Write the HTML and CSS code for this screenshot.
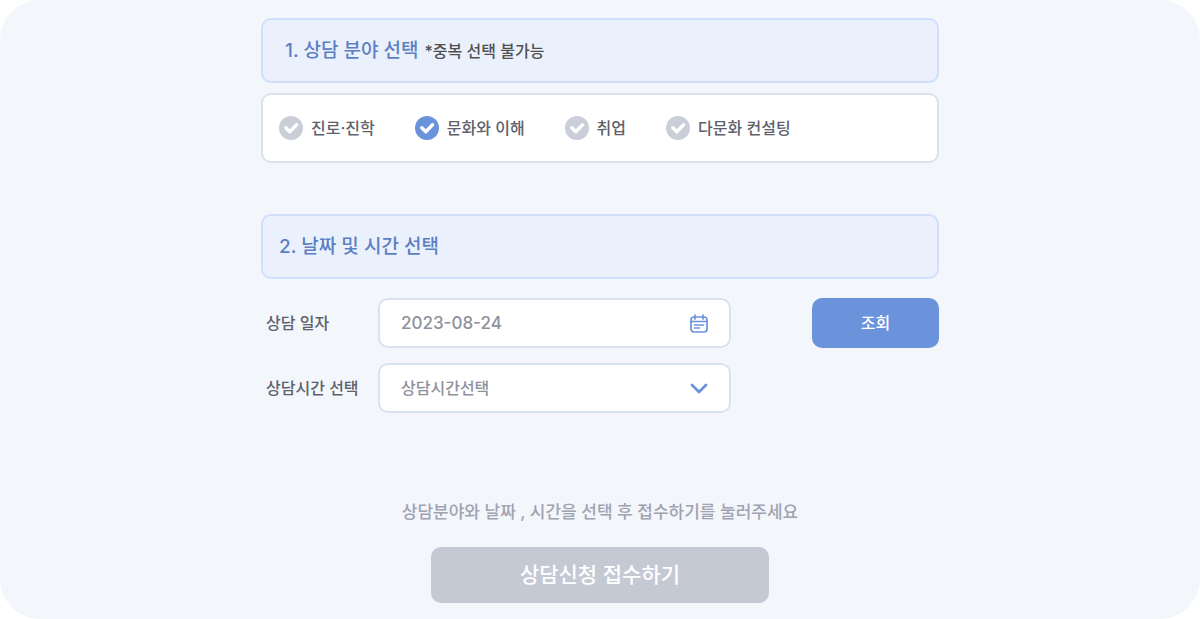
FILE: index.html
```html
<!DOCTYPE html>
<html lang="ko">
<head>
<meta charset="utf-8" />
<meta name="viewport" content="width=device-width, initial-scale=1" />
<title>상담 신청</title>
<link rel="stylesheet" href="styles.css">
</head>
<body>
  <main class="page">
    <form class="container">
      <section>
        <div class="step-title indented">
          <h2 id="fieldTitle">1. 상담 분야 선택</h2>
          <span class="note">*중복 선택 불가능</span>
        </div>
        <div class="options" role="radiogroup" aria-labelledby="fieldTitle">
          <label class="option">
            <span class="check">
              <input type="radio" name="field" value="career" />
              <svg viewBox="0 0 24 24" aria-hidden="true"><path d="M6.8 11.8l4 4 6.8-7" /></svg>
            </span>
            진로·진학
          </label>
          <label class="option">
            <span class="check">
              <input type="radio" name="field" value="culture" checked />
              <svg viewBox="0 0 24 24" aria-hidden="true"><path d="M6.8 11.8l4 4 6.8-7" /></svg>
            </span>
            문화와 이해
          </label>
          <label class="option">
            <span class="check">
              <input type="radio" name="field" value="job" />
              <svg viewBox="0 0 24 24" aria-hidden="true"><path d="M6.8 11.8l4 4 6.8-7" /></svg>
            </span>
            취업
          </label>
          <label class="option">
            <span class="check">
              <input type="radio" name="field" value="consulting" />
              <svg viewBox="0 0 24 24" aria-hidden="true"><path d="M6.8 11.8l4 4 6.8-7" /></svg>
            </span>
            다문화 컨설팅
          </label>
        </div>
      </section>

      <section>
        <div class="step-title">
          <h2>2. 날짜 및 시간 선택</h2>
        </div>
        <div class="fields">
          <div class="row">
            <label class="row-label" for="dateInput">상담 일자</label>
            <div class="control">
              <input type="text" id="dateInput" value="2023-08-24" autocomplete="off" />
              <svg class="icon" viewBox="0 0 20 20" aria-hidden="true">
                <rect x="2" y="4" width="16" height="15" rx="3" />
                <path d="M2 8.5h16M6 2v4M14 2v4M5.5 12h9M5.5 15h5" />
              </svg>
            </div>
            <button type="button" class="search-btn">조회</button>
          </div>
          <div class="row">
            <label class="row-label" for="timeSelect">상담시간 선택</label>
            <div class="control">
              <select id="timeSelect">
                <option>상담시간선택</option>
              </select>
              <svg class="icon arrow" viewBox="0 0 20 20" aria-hidden="true"><path d="M3 7l7 7 7-7" /></svg>
            </div>
          </div>
        </div>
      </section>

      <div class="submit-area">
        <p>상담분야와 날짜 , 시간을 선택 후 접수하기를 눌러주세요</p>
        <button type="submit" class="submit-btn" disabled>상담신청 접수하기</button>
      </div>
    </form>
  </main>
</body>
</html>
```
FILE: styles.css
```css
* {
  box-sizing: border-box;
}
body {
  margin: 0;
  background: #fff;
  color: #5e616b;
  font-family: Inter, "Noto Sans CJK KR", sans-serif;
  font-size: 16px;
  font-weight: 500;
  line-height: 24px;
}
input, select, button {
  font: inherit;
}
.page {
  min-height: 100vh;
  padding: 18px 16px 16px;
  background: #f3f6fb;
  border-radius: 40px;
}
.container {
  max-width: 678px;
  margin: 0 auto;
}
section {
  margin-bottom: 51px;
}

/* step headers */
.step-title {
  display: flex;
  align-items: center;
  gap: 6px;
  min-height: 65px;
  padding: 0 16px;
  background: #eaf1fd;
  border: 2px solid #d0e0fc;
  border-radius: 10px;
}
.step-title.indented {
  padding: 0 22px;
}
h2 {
  margin: 0;
  color: #5c7fc4;
  font-size: 19px;
  font-weight: 500;
}
.note {
  color: #505050;
}

/* radio options */
.options {
  display: flex;
  flex-wrap: wrap;
  align-items: center;
  gap: 12px 40px;
  min-height: 70px;
  margin-top: 10px;
  padding: 8px 16px;
  background: #fff;
  border: 2px solid #dbe2ef;
  border-radius: 10px;
}
.option {
  display: flex;
  align-items: center;
  gap: 8px;
  cursor: pointer;
}
.check {
  display: grid;
}
.check input, .check svg {
  grid-area: 1 / 1;
  width: 24px;
  height: 24px;
  margin: 0;
}
.check input {
  appearance: none;
  background: #caced8;
  border-radius: 50%;
  cursor: pointer;
}
.check input:checked {
  background: #6b93dc;
}
.check svg {
  fill: none;
  stroke: #fff;
  stroke-width: 3.4;
  stroke-linecap: round;
  stroke-linejoin: round;
  pointer-events: none;
}

/* date and time */
.fields {
  display: grid;
  gap: 15px;
  margin-top: 19px;
}
.row {
  display: flex;
  align-items: center;
}
.row-label {
  width: 117px;
  padding-left: 5px;
}
.control {
  display: grid;
  flex: 0 1 353px;
  align-items: center;
}
.control input, .control select {
  grid-area: 1 / 1;
  width: 100%;
  height: 50px;
  padding: 0 52px 0 21px;
  background: #fff;
  border: 2px solid #dbe2ef;
  border-radius: 10px;
  color: #8e919d;
  appearance: none;
  outline: none;
}
.control input {
  font-size: 17px;
}
.control input:focus, .control select:focus {
  border-color: #6b93dc;
}
.icon {
  grid-area: 1 / 1;
  justify-self: end;
  width: 20px;
  height: 20px;
  margin-right: 22px;
  fill: none;
  stroke: #6b93dc;
  stroke-width: 1.7;
  stroke-linecap: round;
  stroke-linejoin: round;
  pointer-events: none;
}
.icon.arrow {
  stroke-width: 2.8;
}
.search-btn {
  width: 127px;
  height: 50px;
  margin-left: auto;
  background: #6b93dc;
  border: none;
  border-radius: 10px;
  color: #fff;
  cursor: pointer;
}

/* submit */
.submit-area {
  display: flex;
  flex-direction: column;
  align-items: center;
  gap: 23px;
  padding-top: 36px;
}
.submit-area p {
  margin: 0;
  color: #a0a3b1;
  font-size: 17px;
}
.submit-btn {
  width: 338px;
  max-width: 100%;
  height: 56px;
  background: #c5c9d3;
  border: none;
  border-radius: 10px;
  color: #fff;
  font-size: 21px;
}
```
